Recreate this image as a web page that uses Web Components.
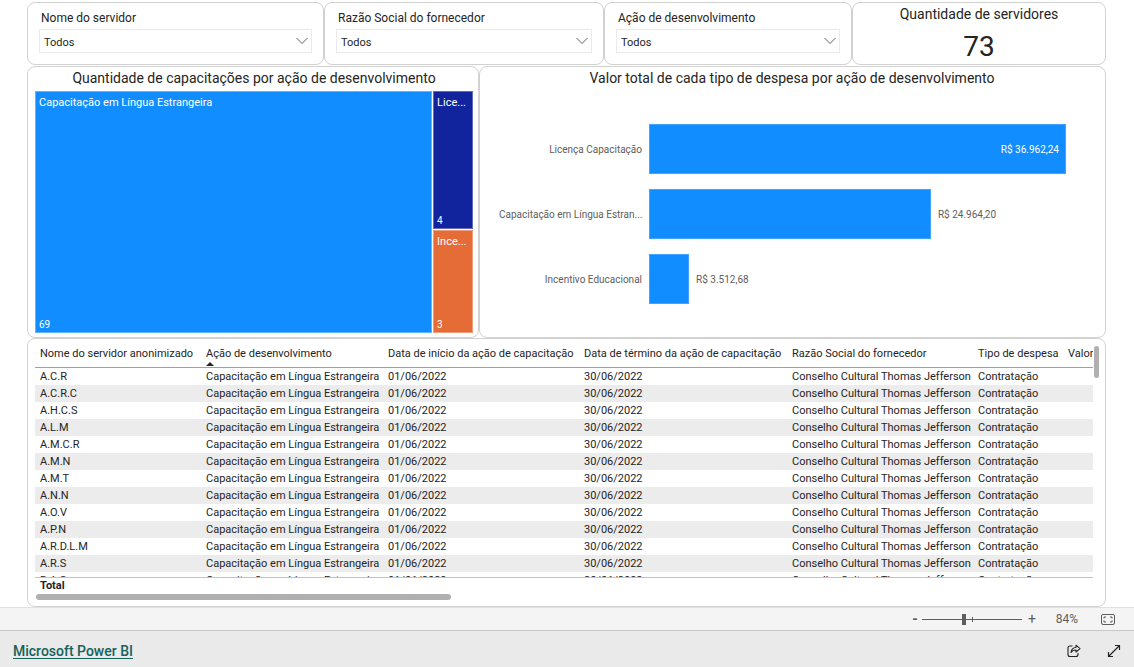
<!DOCTYPE html>
<html lang="pt-BR">
<head>
<meta charset="utf-8">
<meta name="viewport" content="width=device-width, initial-scale=1">
<title>Microsoft Power BI</title>
<style>
  html, body { margin: 0; background: #fff; }
  body { font-family: Roboto, "Open Sans", sans-serif; color: #252423; }
</style>
</head>
<body>
<report-page>
  <report-row kind="filters">
    <slicer-card label="Nome do servidor"></slicer-card>
    <slicer-card label="Razão Social do fornecedor"></slicer-card>
    <slicer-card label="Ação de desenvolvimento"></slicer-card>
    <kpi-card label="Quantidade de servidores">73</kpi-card>
  </report-row>
  <report-row kind="charts">
    <tree-map heading="Quantidade de capacitações por ação de desenvolvimento"></tree-map>
    <bar-chart heading="Valor total de cada tipo de despesa por ação de desenvolvimento"></bar-chart>
  </report-row>
  <data-grid></data-grid>
  <zoom-bar slot="bars"></zoom-bar>
  <brand-bar slot="bars"></brand-bar>
</report-page>

<script>
const CARD = 'box-sizing:border-box;border:1px solid #d2d2d2;border-radius:8px;background:#fff;min-width:0;';
const HEADING = 'h2{margin:0;font-size:14px;line-height:22px;font-weight:400;text-align:center;white-space:nowrap;overflow:hidden}';

class Base extends HTMLElement {
  connectedCallback() {
    if (this.shadowRoot) return;
    this.attachShadow({ mode: 'open' }).innerHTML = this.render();
  }
}

customElements.define('report-page', class extends Base {
  render() {
    return `<style>
      :host{display:flex;flex-direction:column;min-height:100vh}
      main{flex:1;padding:2px 28px 0 27px;display:flex;flex-direction:column}
    </style><main><slot></slot></main><slot name="bars"></slot>`;
  }
});

customElements.define('report-row', class extends Base {
  render() {
    return `<style>
      :host{display:grid}
      :host([kind=filters]){grid-template-columns:297fr 280fr 248fr 254fr;margin-bottom:1px}
      :host([kind=charts]){grid-template-columns:452fr 627fr}
    </style><slot></slot>`;
  }
});

customElements.define('slicer-card', class extends Base {
  render() {
    return `<style>
      :host{display:block;${CARD}padding:7px 11px 11px}
      label{display:block;font-size:12px;line-height:16px;padding:0 2px;white-space:nowrap}
      .box{display:grid;align-items:center;margin-top:3px}
      select,svg{grid-area:1/1}
      select{appearance:none;width:100%;height:24px;padding:2px 4px 0;margin:0;border:1px solid #eaeaea;border-radius:0;background:#fff;color:inherit;font:11px Roboto,sans-serif}
      svg{justify-self:end;margin-right:4px;pointer-events:none}
    </style>
    <label for="s">${this.getAttribute('label')}</label>
    <div class="box"><select id="s"><option>Todos</option></select>
      <svg width="12" height="8" viewBox="0 0 12 8" fill="none" stroke="#605e5c"><path d="M.5 1 6 6.500 11.500 1"/></svg></div>`;
  }
});

customElements.define('kpi-card', class extends Base {
  render() {
    return `<style>:host{display:block;${CARD}}${HEADING}
      p{margin:0;font-size:28px;line-height:39px;padding-top:2px;height:37px;text-align:center}
    </style><h2>${this.getAttribute('label')}</h2><p><slot></slot></p>`;
  }
});

customElements.define('tree-map', class extends Base {
  render() {
    return `<style>
      :host{display:flex;flex-direction:column;${CARD}padding:0 5px 4px 7px}
      ${HEADING}
      .map{margin-top:2px;flex:1;display:grid;grid-template-columns:398fr 40fr;grid-template-rows:137fr 103fr;gap:1px;min-height:242px;color:#fff;font-size:11px;line-height:16px}
      .tile{display:flex;flex-direction:column;justify-content:space-between;box-sizing:border-box;padding:3px 3px 0;min-width:0;border:1px solid #ffffff55}
      .tile span:first-child{overflow:hidden;text-overflow:ellipsis;white-space:nowrap}
      .a{grid-row:1/3;background:#118dff}.b{background:#12239e}.c{background:#e66c37}
      .n{font-size:10px;line-height:14px}
    </style>
    <h2>${this.getAttribute('heading')}</h2>
    <div class="map">
      <div class="tile a"><span>Capacitação em Língua Estrangeira</span><span class="n">69</span></div>
      <div class="tile b"><span>Lice...</span><span class="n">4</span></div>
      <div class="tile c"><span>Ince...</span><span class="n">3</span></div>
    </div>`;
  }
});

customElements.define('bar-chart', class extends Base {
  render() {
    const bars = [
      ['Licença Capacitação', 'R$ 36.962,24', 100, true],
      ['Capacitação em Língua Estran...', 'R$ 24.964,20', 67.6],
      ['Incentivo Educacional', 'R$ 3.512,68', 9.6],
    ];
    return `<style>
      :host{display:block;${CARD}padding:0 39px 32px 19px}
      ${HEADING}
      h2{margin:0 -19px 0 0}
      .plot{display:grid;gap:15px;margin-top:35px;font-size:10px;color:#605e5c;white-space:nowrap}
      .row{display:grid;grid-template-columns:143px 1fr;gap:7px;align-items:center}
      .label{text-align:right}
      .track{display:flex;align-items:center;gap:7px}
      .bar{height:50px;box-sizing:border-box;border:1px solid #41a4ff;background:#118dff;display:flex;align-items:center;justify-content:flex-end;padding-right:6px;color:#fff;flex:none}
    </style>
    <h2>${this.getAttribute('heading')}</h2>
    <div class="plot">${bars.map(([l, v, w, inside]) => `<div class="row"><span class="label">${l}</span>
      <div class="track"><div class="bar" style="width:${w}%">${inside ? v : ''}</div>${inside ? '' : `<span>${v}</span>`}</div></div>`).join('')}</div>`;
  }
});

customElements.define('data-grid', class extends Base {
  render() {
    const names = ['A.C.R', 'A.C.R.C', 'A.H.C.S', 'A.L.M', 'A.M.C.R', 'A.M.N', 'A.M.T', 'A.N.N', 'A.O.V', 'A.P.N', 'A.R.D.L.M', 'A.R.S', 'B.A.S'];
    const rest = ['Capacitação em Língua Estrangeira', '01/06/2022', '30/06/2022', 'Conselho Cultural Thomas Jefferson', 'Contratação', ''];
    const heads = ['Nome do servidor anonimizado', 'Ação de desenvolvimento', 'Data de início da ação de capacitação', 'Data de término da ação de capacitação', 'Razão Social do fornecedor', 'Tipo de despesa', 'Valor'];
    const widths = [167, 182, 196, 208, 186, 90, 230];
    const cols = `<colgroup>${widths.map(w => `<col style="width:${w}px">`).join('')}</colgroup>`;
    return `<style>
      :host{display:block;${CARD}padding:1px 5px 6px 7px}
      .frame{display:grid;grid-template-columns:1fr 6px;column-gap:1px}
      .view{overflow:hidden;min-width:0}
      .body{height:237px}
      .foot{grid-column:1;border-top:1px solid #9ccbf8}
      table{table-layout:fixed;width:1259px;border-collapse:separate;border-spacing:0;font-size:11px;line-height:16px}
      th,td{padding:0 0 0 4px;text-align:left;font-weight:400;white-space:nowrap;height:17px;box-sizing:border-box}
      th:first-child,td:first-child{padding-left:5px}
      thead th{height:28px;padding-top:6px;vertical-align:top;border-bottom:1px solid #5eb0f9;line-height:16px}
      .sort{display:block;width:0;border:4px solid transparent;border-top:0;border-bottom:4px solid #252423}
      tbody tr:nth-child(even) td{background:#ececec}
      .foot th{font-weight:700;height:16px}
      .v{width:5px;height:32px;border-radius:3px;background:#b0b0b0;margin-top:6px}
      .h{width:39.2%;height:6px;border-radius:3px;background:#b0b0b0;margin:0 0 0 1px}
    </style>
    <div class="frame">
      <div class="view body"><table>${cols}
        <thead><tr>${heads.map((h, i) => `<th scope="col">${h}${i === 1 ? '<i class="sort"></i>' : ''}</th>`).join('')}</tr></thead>
        <tbody>${names.map(n => `<tr>${[n, ...rest].map(t => `<td>${t}</td>`).join('')}</tr>`).join('')}</tbody>
      </table></div>
      <div class="v"></div>
      <div class="view foot"><table>${cols}<tbody><tr><th scope="row">Total</th>${'<th></th>'.repeat(6)}</tr></tbody></table></div>
      <div class="h" style="grid-column:1"></div>
    </div>`;
  }
});

customElements.define('zoom-bar', class extends Base {
  render() {
    return `<style>
      :host{display:flex;justify-content:flex-end;align-items:center;box-sizing:border-box;height:24px;padding-right:12px;background:#f4f4f4;border-top:1px solid #e1e1e1;border-bottom:1px solid #c8c8c8;color:#605e5c}
      button{border:0;background:none;padding:0;margin:0;width:20px;height:22px;color:inherit;font:14px/22px Roboto,sans-serif;display:grid;place-items:center}
      .track{display:grid;align-items:center;width:100px}
      .track>*{grid-area:1/1}
      .tick{width:1px;height:5px;background:#605e5c;justify-self:center}
      input{appearance:none;width:100%;height:12px;margin:0;background:linear-gradient(#605e5c,#605e5c) center/100% 1px no-repeat}
      input::-webkit-slider-thumb{appearance:none;width:4px;height:11px;background:#605e5c;border:0;border-radius:0}
      output{font-size:12px;width:40px;margin:0 7px 0 5px;text-align:center}
      .fit{width:28px}
      button.minus{width:14px;font-weight:700}
    </style>
    <button class="minus" aria-label="Reduzir">-</button>
    <div class="track"><i class="tick"></i><input type="range" min="0" max="100" value="42" aria-label="Zoom"></div>
    <button aria-label="Ampliar">+</button>
    <output>84%</output>
    <button class="fit" aria-label="Ajustar à página"><svg width="14" height="11" viewBox="0 0 14 11" fill="none" stroke="#605e5c"><rect x=".5" y=".5" width="13" height="10" rx="1.500"/><path d="M5 3H3v1.500M9 3h2v1.500M5 8H3V6.500M9 8h2V6.500"/></svg></button>`;
  }
});

customElements.define('brand-bar', class extends Base {
  render() {
    return `<style>
      :host{display:flex;align-items:center;box-sizing:border-box;height:36px;padding:4px 13px 0;background:#eaeaea}
      a{font-size:14px;line-height:20px;font-weight:500;color:#16635b;text-decoration:underline;text-underline-offset:2px;margin-right:auto}
      button{border:0;background:none;padding:0;margin:0 0 0 26px;width:14px;height:20px;display:grid;place-items:center}
    </style>
    <a href="#">Microsoft Power BI</a>
    <button aria-label="Compartilhar"><svg width="14" height="14" viewBox="0 0 14 14" fill="none" stroke="#252423" stroke-width="1.100" stroke-linejoin="round"><path d="M5.500 2H3Q1 2 1 4v6.500q0 2 2 2h6q2 0 2-2V9"/><path d="M9 1.200 13 4.600 9 8V6Q5.500 6 4 8.500 4.500 4 9 3.300Z"/></svg></button>
    <button aria-label="Tela inteira"><svg width="14" height="14" viewBox="0 0 14 14" fill="none" stroke="#252423" stroke-width="1.200"><path d="M8 1.500h4.500V6M1.500 8v4.500H6M12.500 1.500l-11 11"/></svg></button>`;
  }
});
</script>
</body>
</html>
